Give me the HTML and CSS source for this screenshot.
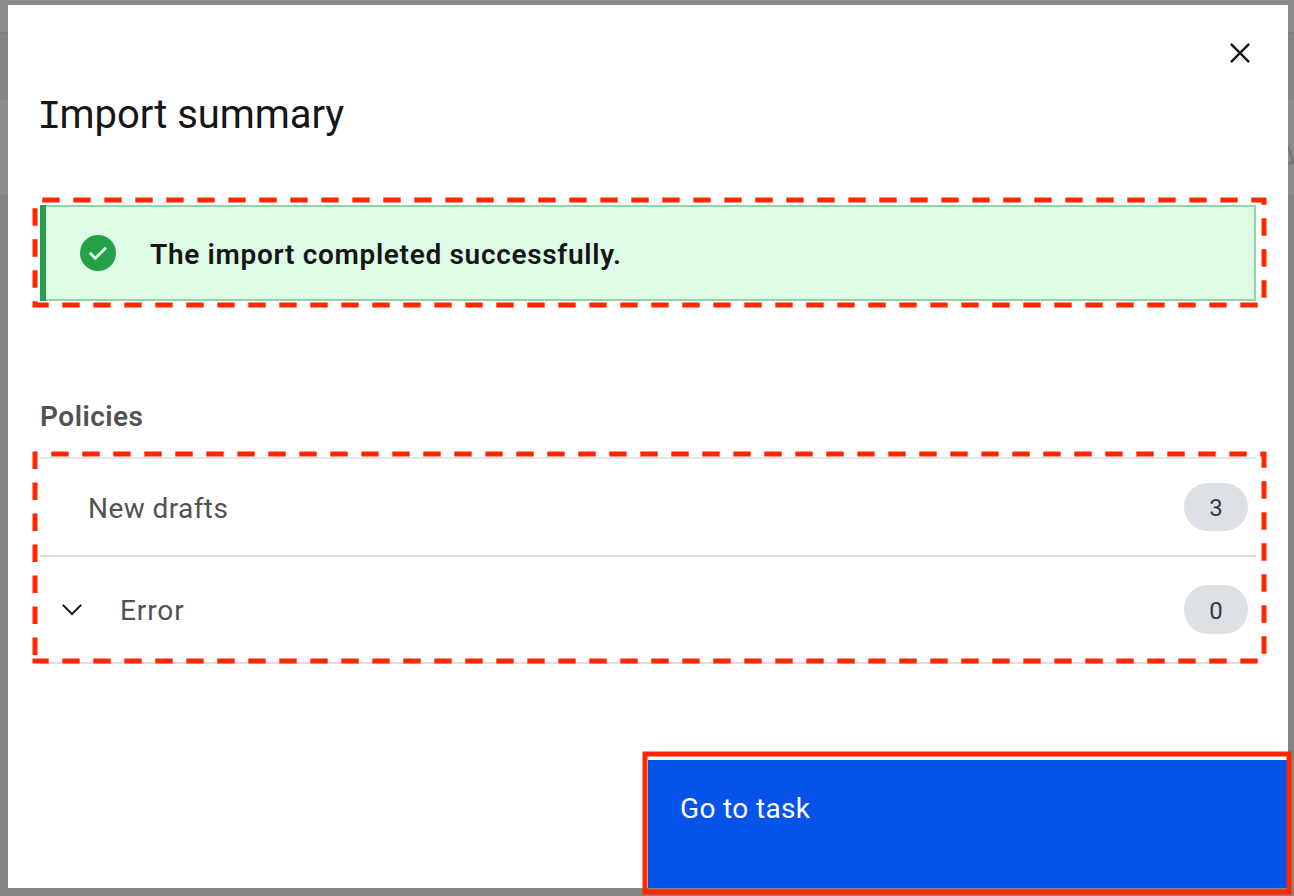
FILE: index.html
```html
<!DOCTYPE html>
<html lang="en">
<head>
<meta charset="utf-8">
<title>Import summary</title>
<link rel="stylesheet" href="styles.css">
</head>
<body>
<div class="backdrop">
  <svg class="backdrop-mark" width="6" height="22" viewBox="0 0 6 22"><path d="M0 2L5 17L6 14M0 19.5H2Q4 19.500 5 17" fill="none" stroke="#747474" stroke-width="2.400"/></svg>
  <main class="modal">
    <header class="modal-header">
      <button class="close" aria-label="Close"><svg width="20" height="20" viewBox="0 0 20 20"><path d="M.9 .9L19.100 19.100M19.100 .9L.9 19.100" stroke="#161616" stroke-width="2.400"/></svg></button>
      <h1 class="title"><span class="slab">I</span>mport summary</h1>
    </header>
    <section class="notification">
      <svg width="36" height="36" viewBox="0 0 36 36"><circle cx="18" cy="18" r="18" fill="#24a148"/><path d="M9.800 17.800L15.300 23.300L26 12.700" fill="none" stroke="#defbe6" stroke-width="2.900"/></svg>
      <p class="message">The import completed successfully.</p>
    </section>
    <section class="policies">
      <h2 class="section-title">Policies</h2>
      <div class="row">
        <span class="label">New drafts</span>
        <span class="tag">3</span>
      </div>
      <div class="row row-error">
        <svg class="chevron" width="20" height="12" viewBox="0 0 20 12"><path d="M.8 .9L10 10L19.200 .9" fill="none" stroke="#161616" stroke-width="2"/></svg>
        <span class="label label-error">Error</span>
        <span class="tag tag-tall">0</span>
      </div>
    </section>
    <footer class="modal-footer"><button class="primary">Go to task</button></footer>
  </main>
  <svg class="annotations" width="1294" height="896" viewBox="0 0 1294 896">
    <path class="dashed" d="M42.300 200H1264V305H35V200H39"/>
    <path class="dashed" d="M51.300 454H1264V661H32.500"/>
    <path class="dashed" d="M35 451.500V654.900"/>
    <rect class="outline" x="645" y="754" width="644" height="138"/>
  </svg>
</div>
</body>
</html>
```
FILE: styles.css
```css
* { box-sizing: border-box; }
body { margin: 0; font-family: Roboto, "Liberation Sans", sans-serif; }
button { font: inherit; border: 0; background: none; padding: 0; }
h1, h2, p { margin: 0; font-weight: 400; }
svg { display: block; flex: none; }

.backdrop {
  position: relative;
  width: 1294px;
  height: 896px;
  padding: 5px 6px 8px 8px;
  overflow: hidden;
  background: linear-gradient(#8b8b8b 32px, #7e7e7e 32px 34px, #848484 34px 100px, #8b8b8b 100px 195px, #848484 195px);
}
.backdrop-mark { position: absolute; left: 1288px; top: 144px; }
.modal {
  width: 1280px;
  height: 883px;
  background: #fff;
  display: flex;
  flex-direction: column;
}
.modal-header { height: 200px; padding: 38px 38px 0 32px; }
.close { display: block; margin-left: auto; width: 20px; height: 20px; }
.title {
  margin-top: 27px;
  font-size: 40px;
  line-height: 50px;
  letter-spacing: -.05px;
  color: #161616;
  white-space: nowrap;
}
.slab {
  display: inline-block;
  margin: 0 -2px 0 -3px;
  font-family: "Liberation Mono", monospace;
  font-size: 41px;
  line-height: 1;
}

.notification {
  height: 96px;
  margin: 0 32px;
  padding-left: 40px;
  display: flex;
  align-items: center;
  gap: 34px;
  background: #defbe6;
  box-shadow: inset 6px 0 #24a148, inset 0 0 0 2px #92d5a5;
}
.message {
  font-size: 28px;
  font-weight: 600;
  letter-spacing: .68px;
  color: #161616;
  padding-top: 3px;
}

.policies { margin: 99px 32px 0; color: #525252; }
.section-title {
  height: 57px;
  font-size: 28px;
  font-weight: 600;
  line-height: 34px;
  letter-spacing: .5px;
}
.row {
  height: 98px;
  display: flex;
  align-items: center;
  padding: 0 8px 0 48px;
  border-top: 2px solid #e5e5e5;
}
.row-error {
  height: 109px;
  padding-left: 22px;
  border-top-color: #ddd;
  border-bottom: 2px solid #ddd;
}
.chevron { margin-right: 38px; }
.label { font-size: 28px; letter-spacing: .42px; padding-top: 3px; }
.label-error { letter-spacing: .9px; padding-top: 2px; }
.tag {
  width: 64px;
  height: 48px;
  margin-left: auto;
  border-radius: 24px;
  background: #dde1e6;
  color: #343a3f;
  font-size: 24px;
  line-height: 50px;
  text-align: center;
}
.tag-tall { height: 49px; line-height: 52px; }

.modal-footer { margin-top: auto; display: flex; justify-content: flex-end; }
.primary {
  width: 640px;
  height: 128px;
  padding: 32px;
  background: #0653ea;
  color: #fff;
  font-size: 28px;
  line-height: 34px;
  letter-spacing: .35px;
  text-align: left;
  display: flex;
}
.annotations { position: absolute; left: 0; top: 0; pointer-events: none; }
.dashed, .outline { fill: none; stroke: #ff2600; stroke-width: 5; }
.dashed { stroke-dasharray: 17.4 13.6; }
```
